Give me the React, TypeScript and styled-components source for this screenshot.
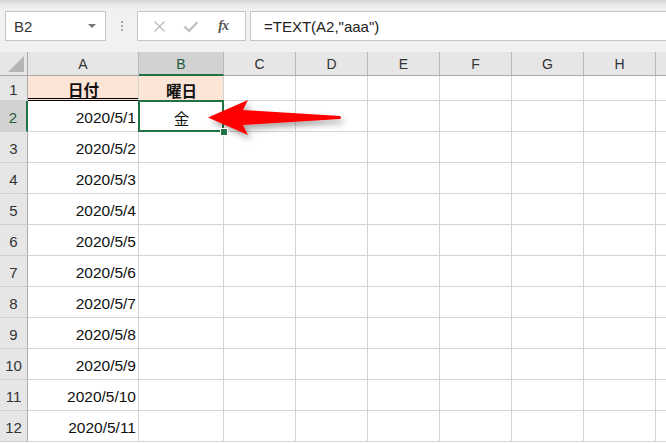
import React from "react";
import styled, { createGlobalStyle, css } from "styled-components";

const GlobalStyle = createGlobalStyle`
  html, body {
    margin: 0;
    padding: 0;
    background: #ffffff;
    overflow: hidden;
  }
  body {
    font-family: "Liberation Sans", "Noto Sans CJK JP", sans-serif;
  }
`;

const GREEN = "#217346";

const Page = styled.div`
  width: 666px;
  height: 444px;
  position: relative;
  overflow: hidden;
`;

const Toolbar = styled.div`
  height: 52px;
  box-sizing: border-box;
  padding: 11px 0 0 5px;
  display: flex;
  align-items: flex-start;
  background: linear-gradient(#d4d4d4 0px, #e9e9e9 5px, #f1f1f1 9px, #f1f1f1 100%);
`;

const Box = styled.div<{ $w?: number }>`
  height: 30px;
  box-sizing: border-box;
  background: #ffffff;
  border: 1px solid #c6c6c6;
  display: flex;
  align-items: center;
  ${(p) => (p.$w ? css`width: ${p.$w}px; flex: none;` : css`flex: 1; border-right: none;`)}
`;

const NameBox = styled(Box)`
  padding: 0 8px 0 8px;
  justify-content: space-between;
  font-size: 15px;
  color: #333;
`;

const DropArrow = styled.span`
  width: 0;
  height: 0;
  border-left: 4px solid transparent;
  border-right: 4px solid transparent;
  border-top: 4px solid #777;
  margin-right: 1px;
`;

const Grip = styled.div`
  width: 31px;
  height: 30px;
  display: flex;
  flex-direction: column;
  align-items: center;
  justify-content: center;
  gap: 2px;
  & > span {
    width: 2px;
    height: 2px;
    background: #a9a9a9;
  }
`;

const Buttons = styled(Box)`
  justify-content: space-around;
  padding: 0 6px;
  margin-right: 4px;
`;

const IconBtn = styled.span<{ $dark?: boolean }>`
  width: 24px;
  display: flex;
  justify-content: center;
  color: ${(p) => (p.$dark ? "#555" : "#bdbdbd")};
`;

const Fx = styled.span`
  font-family: "Liberation Serif", serif;
  font-style: italic;
  font-weight: bold;
  font-size: 14px;
  color: #555;
  letter-spacing: -1px;
`;

const FormulaBox = styled(Box)`
  padding-left: 13px;
  font-size: 15px;
  color: #222;
`;

const Sheet = styled.div`
  display: grid;
  grid-template-columns: 28px 111px 85px 72px 72px 72px 72px 72px 72px 72px;
  grid-template-rows: 24px 25px repeat(11, 31px);
`;

const Corner = styled.div`
  background: #e6e6e6;
  border-right: 1px solid #ababab;
  border-bottom: 1px solid #ababab;
  box-sizing: border-box;
  position: relative;
  &::after {
    content: "";
    position: absolute;
    right: 3px;
    bottom: 3px;
    width: 0;
    height: 0;
    border-left: 16px solid transparent;
    border-bottom: 16px solid #b4b4b4;
  }
`;

const ColHeader = styled.div<{ $sel?: boolean }>`
  box-sizing: border-box;
  background: ${(p) => (p.$sel ? "#d2d2d2" : "#e6e6e6")};
  border-right: 1px solid #b8b8b8;
  border-bottom: ${(p) => (p.$sel ? `2px solid ${GREEN}` : "1px solid #ababab")};
  display: flex;
  align-items: center;
  justify-content: center;
  font-size: 14px;
  color: ${(p) => (p.$sel ? "#1e5b3a" : "#333")};
  padding-top: ${(p) => (p.$sel ? "1px" : "0")};
`;

const RowHeader = styled.div<{ $sel?: boolean }>`
  box-sizing: border-box;
  background: ${(p) => (p.$sel ? "#d2d2d2" : "#e6e6e6")};
  border-right: ${(p) => (p.$sel ? `2px solid ${GREEN}` : "1px solid #ababab")};
  border-bottom: 1px solid #d0d0d0;
  display: flex;
  align-items: center;
  justify-content: center;
  padding-top: 3px;
  font-size: 15px;
  color: ${(p) => (p.$sel ? "#1e5b3a" : "#333")};
`;

const Cell = styled.div<{ $fill?: boolean; $bold?: boolean; $align?: "left" | "center" | "right"; $double?: boolean }>`
  box-sizing: border-box;
  position: relative;
  background: ${(p) => (p.$fill ? "#fce4d6" : "#ffffff")};
  border-right: 1px solid #d4d4d4;
  border-bottom: ${(p) => (p.$double ? "3px double #000" : "1px solid #d4d4d4")};
  display: flex;
  align-items: center;
  justify-content: ${(p) =>
    p.$align === "right" ? "flex-end" : p.$align === "center" ? "center" : "flex-start"};
  padding: 3px 2px 0 3px;
  font-size: 15.5px;
  font-weight: ${(p) => (p.$bold ? "bold" : "normal")};
  color: #111;
  white-space: nowrap;
`;

const Selection = styled.span`
  position: absolute;
  left: -1px;
  top: -1px;
  right: -1px;
  bottom: -1px;
  border: 2px solid ${GREEN};
  pointer-events: none;
`;

const FillHandle = styled.span`
  position: absolute;
  right: -5px;
  bottom: -5px;
  width: 6px;
  height: 6px;
  background: ${GREEN};
  border: 1px solid #fff;
  z-index: 2;
`;

const ArrowSvg = styled.svg`
  position: absolute;
  left: 200px;
  top: 92px;
  overflow: visible;
`;

const columns = ["A", "B", "C", "D", "E", "F", "G", "H", ""];
const dates = Array.from({ length: 11 }, (_, i) => `2020/5/${i + 1}`);

function HeaderRow() {
  return (
    <>
      <Corner />
      {columns.map((c, i) => (
        <ColHeader key={i} $sel={c === "B"}>
          {c}
        </ColHeader>
      ))}
    </>
  );
}

function Blanks({ n }: { n: number }) {
  return (
    <>
      {Array.from({ length: n }, (_, i) => (
        <Cell key={i} />
      ))}
    </>
  );
}

export default function App() {
  return (
    <Page>
      <GlobalStyle />
      <Toolbar>
        <NameBox $w={101}>
          <span>B2</span>
          <DropArrow />
        </NameBox>
        <Grip>
          <span />
          <span />
          <span />
        </Grip>
        <Buttons $w={109}>
          <IconBtn>
            <svg width="13" height="13" viewBox="0 0 13 13">
              <path d="M1.5 1.5 L11.5 11.5 M11.5 1.5 L1.5 11.5" stroke="currentColor" strokeWidth="1.4" />
            </svg>
          </IconBtn>
          <IconBtn>
            <svg width="16" height="13" viewBox="0 0 16 13">
              <path d="M1.5 6.5 L6 11 L14.5 2" stroke="currentColor" strokeWidth="2" fill="none" />
            </svg>
          </IconBtn>
          <IconBtn $dark>
            <Fx>fx</Fx>
          </IconBtn>
        </Buttons>
        <FormulaBox>=TEXT(A2,"aaa")</FormulaBox>
      </Toolbar>

      <Sheet>
        <HeaderRow />

        <RowHeader>1</RowHeader>
        <Cell $fill $bold $align="center" $double>
          日付
        </Cell>
        <Cell $fill $bold $align="center">
          曜日
        </Cell>
        <Blanks n={7} />

        {dates.map((d, i) => (
          <React.Fragment key={d}>
            <RowHeader $sel={i === 0}>{i + 2}</RowHeader>
            <Cell $align="right">{d}</Cell>
            {i === 0 ? (
              <Cell $align="center">
                金
                <Selection />
                <FillHandle />
              </Cell>
            ) : (
              <Cell />
            )}
            <Blanks n={7} />
          </React.Fragment>
        ))}
      </Sheet>

      <ArrowSvg width="150" height="55" viewBox="0 0 150 55">
        <defs>
          <filter id="shadow" x="-20%" y="-40%" width="140%" height="180%">
            <feDropShadow dx="3" dy="4" stdDeviation="3" floodColor="#000" floodOpacity="0.35" />
          </filter>
        </defs>
        <path
          d="M8 25.5 L48 8 L43 18 L140 24 Q142 25.5 140 27 L43 33 L48 43 Z"
          fill="#ff0000"
          filter="url(#shadow)"
        />
      </ArrowSvg>
    </Page>
  );
}
